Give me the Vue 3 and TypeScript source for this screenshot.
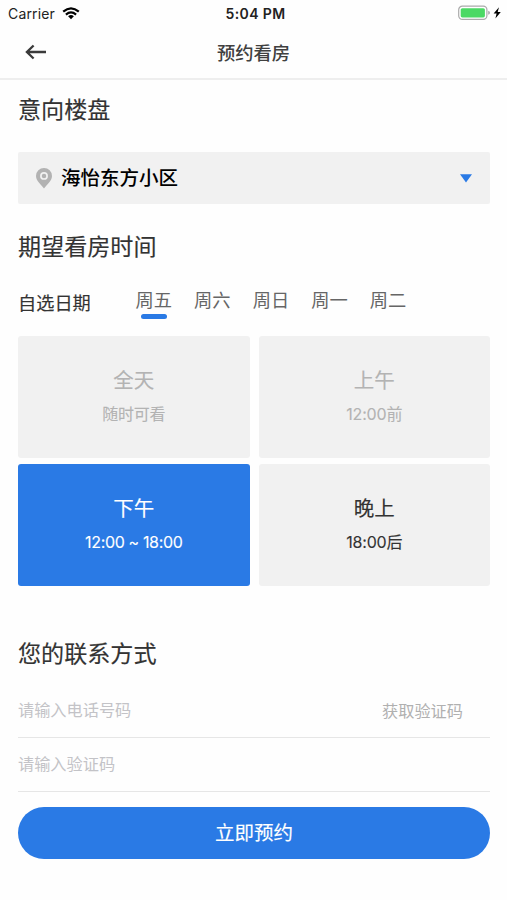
<script setup lang="ts">
import { ref } from 'vue'

interface Slot {
  title: string
  note: string
  disabled: boolean
}

const days: string[] = ['周五', '周六', '周日', '周一', '周二']
const activeDay = ref(0)

const slots: Slot[] = [
  { title: '全天', note: '随时可看', disabled: true },
  { title: '上午', note: '12:00前', disabled: true },
  { title: '下午', note: '12:00 ~ 18:00', disabled: false },
  { title: '晚上', note: '18:00后', disabled: false },
]
const activeSlot = ref(2)

const phone = ref('')
const code = ref('')

function pickSlot(index: number): void {
  if (!slots[index].disabled) activeSlot.value = index
}
</script>

<template>
  <div class="screen">
    <div class="status">
      <div class="carrier">
        <span>Carrier</span>
        <svg class="wifi" width="18" height="13" viewBox="0 0 18 13">
          <path d="M1.2 4.7Q9-2.1 16.8 4.7M3.9 7.6Q9 3.3 14.1 7.6" fill="none" stroke="#000" stroke-width="2.2" />
          <path d="M6.1 9.3Q9 6.9 11.9 9.3L9 12.3Z" fill="#000" />
        </svg>
      </div>
      <span class="clock">5:04 PM</span>
      <div class="power">
        <svg width="44" height="16" viewBox="0 0 44 16">
          <rect x="0.7" y="1.2" width="28.2" height="13.2" rx="3.6" fill="#fff" stroke="#aaa" stroke-width="1.2" />
          <rect x="2.7" y="3.2" width="24.2" height="9.2" rx="1.6" fill="#4bd964" />
          <path d="M30.2 5.8Q32 6.3 32 7.8T30.2 9.8Z" fill="#aaa" />
          <path d="M41 2.3L35.6 8.6H38.6L37.4 13.5L42.8 7H39.7Z" fill="#000" />
        </svg>
      </div>
    </div>

    <header class="nav">
      <button class="back" aria-label="返回">
        <svg width="22" height="16" viewBox="0 0 22 16">
          <path d="M8.6 1.5L1.9 8L8.6 14.5M2.2 8H21" fill="none" stroke="#3a3a3a" stroke-width="2.3" />
        </svg>
      </button>
      <h1 class="nav-title">预约看房</h1>
    </header>

    <main class="body">
      <h2 class="heading">意向楼盘</h2>
      <div class="select">
        <svg class="pin" width="16" height="21" viewBox="0 0 16 21">
          <path d="M8 0A8 8 0 0 0 0 8C0 13 5 16.5 8 20.4C11 16.5 16 13 16 8A8 8 0 0 0 8 0Z" fill="#b2b2b2" />
          <circle cx="8" cy="7.9" r="3.1" fill="#b2b2b2" stroke="#f1f1f1" stroke-width="1.7" />
        </svg>
        <span class="estate">海怡东方小区</span>
        <svg class="caret" width="12" height="9" viewBox="0 0 12 9">
          <path d="M0 0.3H12L6 8.5Z" fill="#2a7ae5" />
        </svg>
      </div>

      <h2 class="heading time-heading">期望看房时间</h2>
      <div class="dates">
        <span class="dates-label">自选日期</span>
        <div class="days">
          <span
            v-for="(day, i) in days"
            :key="day"
            class="day"
            :class="{ active: i === activeDay }"
            @click="activeDay = i"
          >{{ day }}</span>
        </div>
      </div>

      <div class="slots">
        <div
          v-for="(slot, i) in slots"
          :key="slot.title"
          class="slot"
          :class="{ disabled: slot.disabled, active: i === activeSlot }"
          @click="pickSlot(i)"
        >
          <span class="slot-title">{{ slot.title }}</span>
          <span class="slot-note">{{ slot.note }}</span>
        </div>
      </div>

      <h2 class="heading contact-heading">您的联系方式</h2>
      <div class="field">
        <input v-model="phone" class="input" type="tel" placeholder="请输入电话号码" />
        <button class="send">获取验证码</button>
      </div>
      <div class="field">
        <input v-model="code" class="input" type="text" placeholder="请输入验证码" />
      </div>
      <button class="submit">立即预约</button>
    </main>
  </div>
</template>

<style>
body {
  background: #fff;
}
</style>

<style scoped>
.screen {
  box-sizing: border-box;
  width: 100%;
  height: 900px;
  overflow: hidden;
  background: #fefefe;
  color: #333;
  font-family: Inter, 'Noto Sans CJK SC', sans-serif;
}
button {
  padding: 0;
  border: 0;
  background: none;
  font-family: inherit;
}
svg {
  display: block;
}
.status {
  display: grid;
  grid-template-columns: 1fr auto 1fr;
  align-items: center;
  height: 27px;
  padding: 0 5px 0 8px;
  color: #222;
}
.carrier {
  display: flex;
  align-items: center;
  gap: 7px;
  font-size: 14px;
  line-height: 27px;
  letter-spacing: 0.15px;
}
.wifi {
  margin-top: -1px;
}
.clock {
  margin-left: 1px;
  font-size: 14px;
  font-weight: 600;
  line-height: 27px;
  letter-spacing: 0.4px;
}
.power {
  display: flex;
  justify-content: flex-end;
  margin-top: -1px;
}
.nav {
  display: grid;
  grid-template-columns: 60px 1fr 60px;
  align-items: center;
  box-sizing: border-box;
  height: 53px;
  border-bottom: 2px solid #eee;
}
.back {
  padding-left: 25px;
}
.back svg {
  margin-top: -1px;
}
.nav-title {
  margin: 2px 0 0;
  text-align: center;
  color: #404040;
  font-size: 18.3px;
  font-weight: 500;
  line-height: 49px;
}
.body {
  padding: 12px 17px 0 18px;
}
.heading {
  margin: 0;
  font-size: 23.1px;
  font-weight: 400;
  line-height: 36px;
  -webkit-text-stroke: 0.15px currentColor;
}
.select {
  display: flex;
  align-items: center;
  box-sizing: border-box;
  height: 52px;
  margin-top: 24px;
  padding: 0 18px;
  border-radius: 2px;
  background: #f1f1f1;
}
.estate {
  flex: 1;
  margin-left: 9px;
  color: #000;
  font-size: 19.5px;
  font-weight: 500;
  line-height: 52px;
}
.time-heading {
  margin-top: 25px;
}
.dates {
  display: flex;
  align-items: flex-start;
  height: 56px;
  margin-top: 15px;
}
.dates-label {
  width: 117.5px;
  margin-top: 8px;
  font-size: 18.2px;
  line-height: 30px;
  -webkit-text-stroke: 0.15px currentColor;
}
.days {
  display: flex;
  gap: 22px;
  margin-top: 5px;
}
.day {
  display: flex;
  flex-direction: column;
  align-items: center;
  color: #666;
  font-size: 18.3px;
  line-height: 30px;
}
.day.active::after {
  content: '';
  width: 26px;
  height: 5px;
  margin-top: -1px;
  border-radius: 3px;
  background: #2a7ae5;
}
.slots {
  display: grid;
  grid-template-columns: 1fr 1fr;
  gap: 6px 9px;
}
.slot {
  display: flex;
  flex-direction: column;
  align-items: center;
  box-sizing: border-box;
  height: 122px;
  padding-top: 29px;
  border-radius: 3px;
  background: #f1f1f1;
  color: #333;
}
.slot-title {
  font-size: 20.5px;
  line-height: 32px;
  -webkit-text-stroke: 0.15px currentColor;
}
.slot-note {
  margin-top: 5px;
  font-size: 16px;
  line-height: 24px;
  letter-spacing: -0.2px;
  -webkit-text-stroke: 0.1px currentColor;
}
.slot.disabled {
  color: #b3b3b3;
}
.slot.active {
  background: #2a7ae5;
  color: #fff;
}
.slot.active .slot-note {
  letter-spacing: -0.35px;
}
.contact-heading {
  margin-top: 50px;
}
.field {
  display: flex;
  align-items: center;
  box-sizing: border-box;
  height: 54px;
  padding-bottom: 2px;
  border-bottom: 1px solid #e6e6e6;
}
.contact-heading + .field {
  margin-top: 12px;
}
.input {
  flex: 1;
  min-width: 0;
  height: 30px;
  padding: 0;
  border: 0;
  outline: 0;
  background: none;
  color: #333;
  font-family: inherit;
  font-size: 16.2px;
}
.input::placeholder {
  color: #c3c3c7;
}
.send {
  margin-top: 2px;
  margin-right: 27px;
  color: #b0b0b0;
  font-size: 16.2px;
  line-height: 30px;
}
.submit {
  display: block;
  width: 100%;
  height: 52px;
  margin-top: 15px;
  border-radius: 26px;
  background: #2a7ae5;
  color: #fff;
  font-size: 19.5px;
  font-weight: 400;
  line-height: 53px;
  -webkit-text-stroke: 0.15px currentColor;
}
</style>
